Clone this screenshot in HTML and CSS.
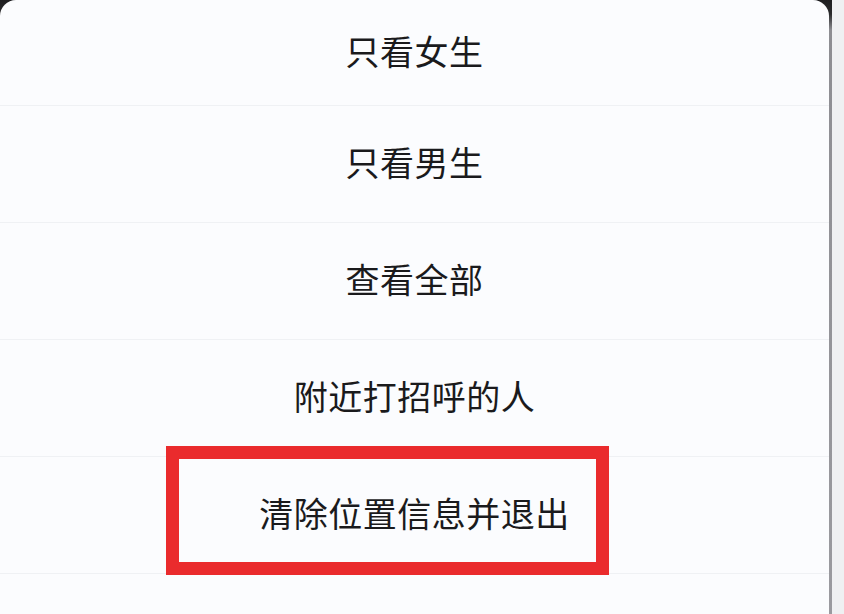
FILE: index.html
```html
<!DOCTYPE html>
<html lang="zh-CN">
<head>
<meta charset="utf-8">
<title>附近的人</title>
<link rel="stylesheet" href="styles.css">
</head>
<body>
<div class="screen">
  <div class="device">
    <div class="sheet">
      <div class="item item-first">只看女生</div>
      <div class="item">只看男生</div>
      <div class="item">查看全部</div>
      <div class="item">附近打招呼的人</div>
      <div class="item">清除位置信息并退出</div>
      <div class="item item-cancel"></div>
      <div class="mark"></div>
    </div>
  </div>
  <div class="backdrop"></div>
</div>
</body>
</html>
```

FILE: styles.css
```css
html, body {
  margin: 0;
  padding: 0;
  height: 100%;
  overflow: hidden;
  background: #f1f2f4;
}

.screen {
  display: flex;
  height: 614px;
  overflow: hidden;
}

/* dark phone frame showing at the sheet's rounded corners and right edge */
.device {
  width: 829px;
  padding-right: 3px;
  background: linear-gradient(#1e1e20 0, #2a2a2c 14px, #8d8d92 30px, #9a9a9f 100%);
}

.backdrop {
  flex: 1;
  background: #eff0f2;
}

.sheet {
  position: relative;
  height: 100%;
  overflow: hidden;
  background: #fbfcfe;
  border-radius: 16px 16px 0 0;
  display: flex;
  flex-direction: column;
  font-family: "Noto Sans CJK SC", "Noto Sans", sans-serif;
  font-size: 34px;
  color: #1a1a1c;
}

.item {
  box-sizing: border-box;
  height: 117px;
  flex: none;
  display: flex;
  align-items: center;
  justify-content: center;
  padding-bottom: 5px;
  border-bottom: 1px solid #eff1f4;
  letter-spacing: 0.5px;
}

.item-first {
  height: 106px;
}

.item-cancel {
  flex: 1;
  min-height: 0;
  border-bottom: none;
}

/* red annotation frame around the exit action */
.mark {
  position: absolute;
  left: 166px;
  top: 446px;
  width: 417px;
  height: 103px;
  border: 13px solid #ea2b2d;
}
```
